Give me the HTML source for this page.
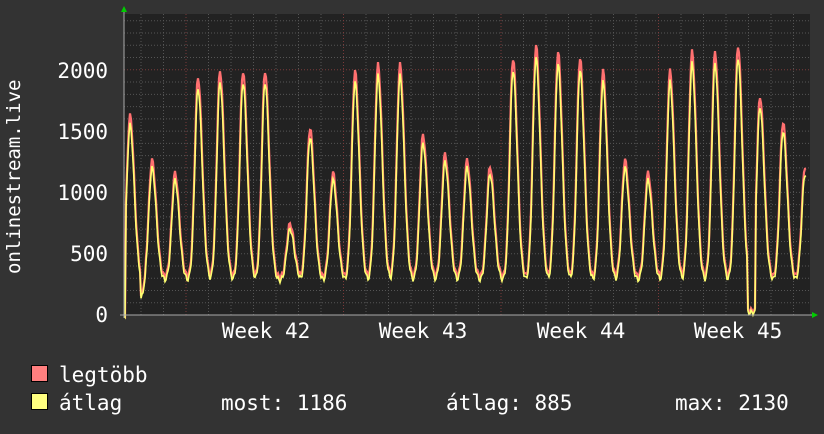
<!DOCTYPE html><html><head><style>
body{margin:0;background:#333;width:824px;height:430px;overflow:hidden;font-family:"DejaVu Sans Mono","Liberation Mono",monospace;}
svg text{font-family:"DejaVu Sans Mono","Liberation Mono",monospace;fill:#fff}
</style></head><body>
<svg id="s" width="824" height="430" xmlns="http://www.w3.org/2000/svg">
<rect x="0" y="0" width="824" height="430" fill="#333"/>
<rect x="124" y="14" width="686" height="301" fill="#222"/>
<g id="grid"></g>
<polyline id="red" fill="none" stroke="#ff7070" stroke-width="2.2"/>
<polyline id="yel" fill="none" stroke="#ffff70" stroke-width="1.6"/>
<line x1="124" y1="10" x2="124" y2="318" stroke="#aaa" stroke-width="1"/>
<line x1="120" y1="315" x2="814" y2="315" stroke="#aaa" stroke-width="1"/>
<polygon points="121,12 127,12 124,6" fill="#0c0"/>
<polygon points="812,312 812,318 818,315" fill="#0c0"/>
<g font-size="21" text-anchor="end">
<text x="108" y="322">0</text><text x="108" y="261">500</text><text x="108" y="200">1000</text><text x="108" y="139">1500</text><text x="108" y="78">2000</text>
</g>
<g font-size="21" text-anchor="middle">
<text x="266" y="338">Week 42</text><text x="423" y="338">Week 43</text><text x="581" y="338">Week 44</text><text x="738" y="338">Week 45</text>
</g>
<text font-size="19" transform="translate(20,274) rotate(-90)">onlinestream.live</text>
<rect x="31.5" y="365.5" width="16" height="16" fill="#ff7f7f" stroke="#000"/>
<rect x="31.5" y="393.5" width="16" height="16" fill="#ffff7f" stroke="#000"/>
<g font-size="21"><text x="59" y="382">legtöbb</text><text x="59" y="410">átlag</text>
<text x="221" y="410">most: 1186</text><text x="446" y="410">átlag: 885</text><text x="675" y="410">max: 2130</text></g>
</svg>
<script>
var g=document.getElementById('grid'),h='';
for(var v=100;v<=2400;v+=100){var y=315-v*0.1226;var maj=(v==2000);h+='<line x1="124" x2="810" y1="'+y+'" y2="'+y+'" stroke="'+(maj?'#7a3a3a':'#555')+'" stroke-dasharray="1,2"/>';}
for(var x=141;x<810;x+=22.5){var k=Math.round((x-186)/22.5);var maj=(k%7==0);h+='<line y1="14" y2="315" x1="'+x+'" x2="'+x+'" stroke="'+(maj?'#7a3a3a':'#555')+'" stroke-dasharray="1,2"/>';}
g.innerHTML=h;
var pk=[[130,1550],[152,1200],[175,1100],[198,1850],[220,1900],[243,1900],[265,1900],[290,700],[310,1450],[333,1100],[355,1900],[378,1950],[400,1950],[423,1400],[445,1250],[467,1200],[490,1150],[513,2000],[536,2100],[558,2050],[580,2000],[603,1900],[625,1200],[648,1100],[670,1900],[692,2050],[715,2050],[738,2100],[760,1700],[783,1500],[805,1150]];
function val(x){var best=0;for(var i=0;i<pk.length;i++){var d=x-pk[i][0];var w=d<0?3.2:4.2;var f=Math.exp(-(d*d)/(2*w*w));var v=280+(pk[i][1]-280)*f;if(v>best)best=v;}
if(x>140&&x<146)best=Math.min(best,80+(x-140)*40);if(x>747&&x<756)best=20;if(x<126)best=0;return best;}
var r=[],yv=[];for(var x=124;x<=806;x+=1){var v=val(x);var n=Math.sin(x*1.7)*20;yv.push(x+','+(315-(v+n)*0.1226).toFixed(1));r.push(x+','+(315-(v*1.04+15+n)*0.1226).toFixed(1));}
document.getElementById('red').setAttribute('points',r.join(' '));
document.getElementById('yel').setAttribute('points',yv.join(' '));
</script>
</body></html>
